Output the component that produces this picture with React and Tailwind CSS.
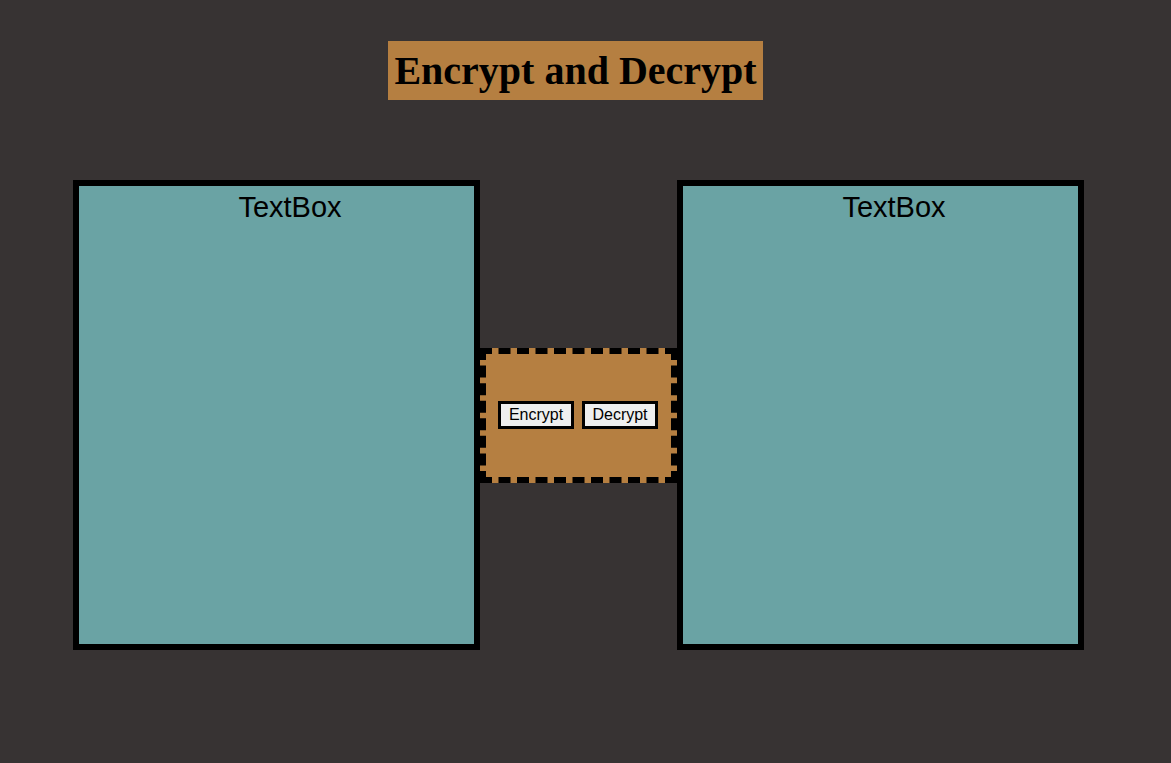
import React from "react";

const TextBox = () => (
  <div className="w-[407px] h-[470px] border-[6px] border-black bg-[#6aa3a4] flex flex-col">
    <p className="mt-[5px] pl-[28px] text-center text-[29px] leading-[33px] text-black font-['Liberation_Sans',Arial,sans-serif]">
      TextBox
    </p>
  </div>
);

export default function App() {
  return (
    <div className="min-h-screen w-full bg-[#373333]">
      <div className="w-[1156px] flex flex-col items-center pt-[41px]">
        <h1 className="mr-[5px] bg-[#b57f41] px-[6px] py-[6px] text-[40px] leading-[47px] font-bold text-black font-['Liberation_Serif','Times_New_Roman',serif]">
          Encrypt and Decrypt
        </h1>

        <div className="mt-[80px] flex items-center">
          <TextBox />
          <div className="w-[197px] h-[135px] border-[6px] border-dashed border-black bg-[#b57f41] flex items-center justify-center gap-[8px]">
            <button className="w-[76px] h-[28px] border-[3px] border-black bg-[#efefef] text-[16px] leading-[18px] text-black font-['Liberation_Sans',Arial,sans-serif] flex items-center justify-center">
              Encrypt
            </button>
            <button className="w-[76px] h-[28px] border-[3px] border-black bg-[#efefef] text-[16px] leading-[18px] text-black font-['Liberation_Sans',Arial,sans-serif] flex items-center justify-center">
              Decrypt
            </button>
          </div>
          <TextBox />
        </div>
      </div>
    </div>
  );
}
